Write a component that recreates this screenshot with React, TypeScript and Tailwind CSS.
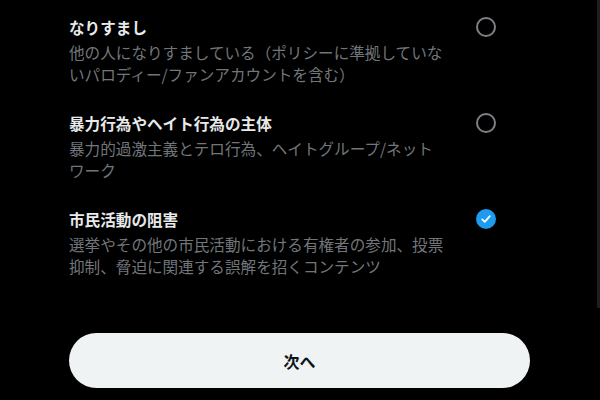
import React from "react";

type Item = { title: string; lines: string[]; checked: boolean };

const items: Item[] = [
  {
    title: "なりすまし",
    lines: [
      "他の人になりすましている（ポリシーに準拠していな",
      "いパロディー/ファンアカウントを含む）",
    ],
    checked: false,
  },
  {
    title: "暴力行為やヘイト行為の主体",
    lines: ["暴力的過激主義とテロ行為、ヘイトグループ/ネット", "ワーク"],
    checked: false,
  },
  {
    title: "市民活動の阻害",
    lines: [
      "選挙やその他の市民活動における有権者の参加、投票",
      "抑制、脅迫に関連する誤解を招くコンテンツ",
    ],
    checked: true,
  },
];

function Radio({ checked }: { checked: boolean }) {
  if (checked) {
    return (
      <div className="mt-px flex h-[20px] w-[20px] shrink-0 items-center justify-center rounded-full bg-[#1d9bf0]">
        <svg width="12" height="12" viewBox="0 0 12 12" fill="none">
          <path d="M2.2 6.4 L4.8 8.8 L9.8 3.2" stroke="#ffffff" strokeWidth="1.8" strokeLinecap="round" strokeLinejoin="round" />
        </svg>
      </div>
    );
  }
  return <div className="mt-px h-[20px] w-[20px] shrink-0 rounded-full border-2 border-[#7d8185]" />;
}

export default function App() {
  return (
    <div
      className="relative h-[400px] w-[600px] overflow-hidden bg-black"
      style={{ fontFamily: '"Noto Sans CJK JP", "Noto Sans", sans-serif' }}
    >
      <div className="flex flex-col gap-[27px] pl-[69px] pt-[16px]">
        {items.map((it) => (
          <div key={it.title} className="flex items-start">
            <div className="w-[407px]">
              <div className="text-[15.6px] font-bold leading-[22px] text-[#e7e9ea]">{it.title}</div>
              <div className="mt-[3px] text-[15.6px] leading-[22px] text-[#71767b]">
                {it.lines.map((l) => (
                  <span key={l} className="block whitespace-nowrap">
                    {l}
                  </span>
                ))}
              </div>
            </div>
            <Radio checked={it.checked} />
          </div>
        ))}
      </div>
      <div className="mt-[56px] pl-[69px]">
        <button className="flex h-[55px] w-[461px] items-center justify-center rounded-full bg-[#eff3f4] text-[16px] font-bold text-[#0f1419]">
          次へ
        </button>
      </div>
      <div className="absolute right-0 top-0 h-[308px] w-[3px] bg-[#1e1e22]" />
    </div>
  );
}
